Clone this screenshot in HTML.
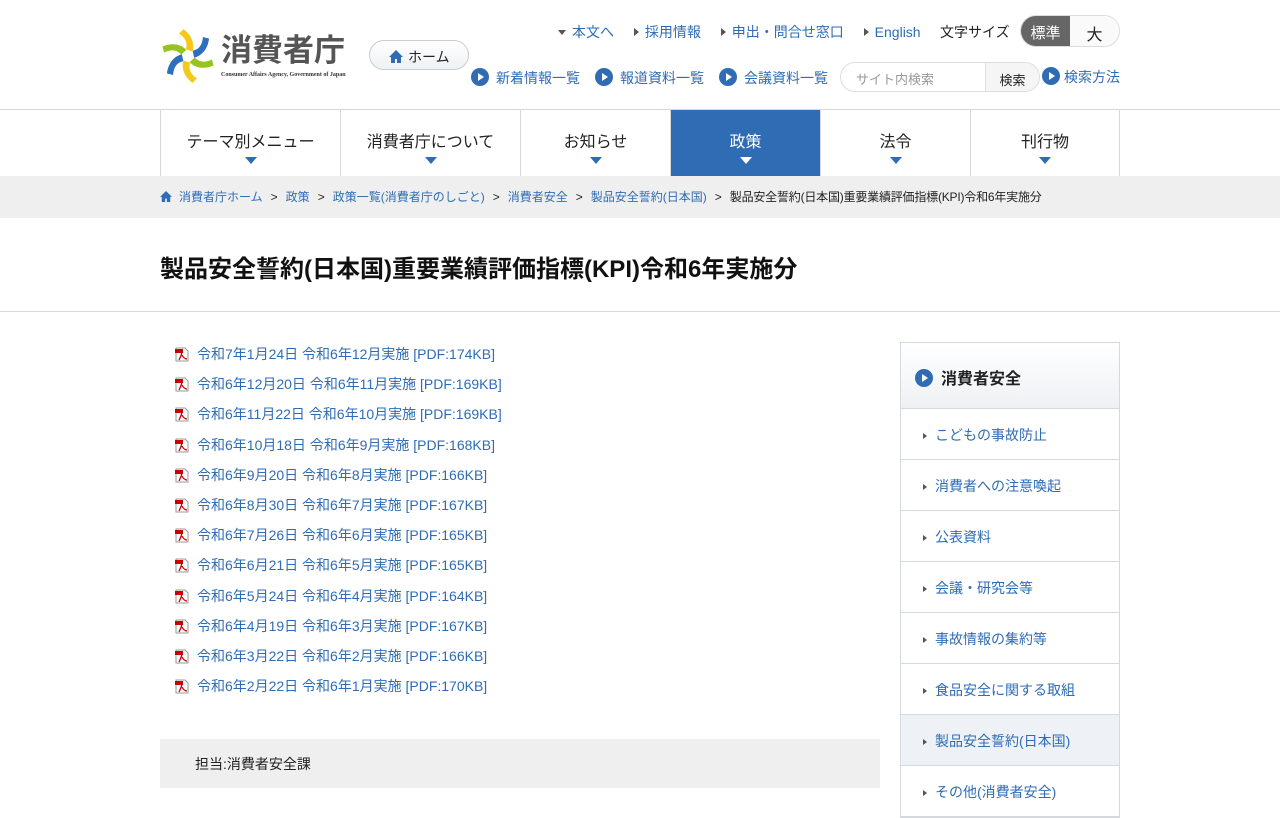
<!DOCTYPE html>
<html><head><meta charset="utf-8"><style>
*{box-sizing:border-box;margin:0;padding:0}
body{width:1280px;height:800px;overflow:hidden;background:#fff;font-family:"Liberation Sans","Noto Sans CJK JP",sans-serif;color:#222}
a{color:#2f6cb4;text-decoration:none}
.abs{position:absolute}
.hdr{position:relative;height:110px;border-bottom:1px solid #d5d8dc}
.circ{display:inline-block;width:18px;height:18px;border-radius:50%;background:#2f6cb4;position:relative;vertical-align:-3px;margin-right:7px}
.circ:after{content:"";position:absolute;left:7px;top:5px;border-left:6px solid #fff;border-top:4px solid transparent;border-bottom:4px solid transparent}
.tri{display:inline-block;border-left:5px solid #555;border-top:4px solid transparent;border-bottom:4px solid transparent;margin-right:6px;vertical-align:1px}
.nav{position:absolute;top:110px;left:160px;width:960px;height:66px;display:flex;border-left:1px solid #d5d8dc}
.nav div{border-right:1px solid #d5d8dc;text-align:center;font-size:16px;padding-top:18px;position:relative}
.nav div:after{content:"";position:absolute;left:50%;margin-left:-6px;top:47px;border-top:7px solid #2f6cb4;border-left:6px solid transparent;border-right:6px solid transparent}
.nav .act{background:#2f6cb4;color:#fff}
.nav .act:after{border-top-color:#fff}
.bc{position:absolute;top:176px;left:0;width:1280px;height:42px;background:#efefef;font-size:12px;padding:12px 0 0 160px;white-space:nowrap}
.bc span.s{margin:0 8px;color:#222}
.list{position:absolute;left:175px;top:344px;font-size:14px}
.list div{height:30.2px}
.pdf{display:inline-block;width:15px;height:15px;vertical-align:-3px;margin-right:7px}
.side{position:absolute;left:900px;top:342px;width:220px;border:1px solid #d5d8dc}
.side .h{height:66px;background:linear-gradient(#fff,#eef1f4);font-weight:bold;font-size:16px;padding:22px 0 0 14px;border-bottom:1px solid #d5d8dc}
.side .i{height:51px;border-bottom:1px solid #d5d8dc;font-size:14px;padding:16px 0 0 22px}
.side .i .tri{border-left-width:4px;border-top-width:3.5px;border-bottom-width:3.5px;margin-right:8px}
</style></head><body>
<div class="hdr">
 <svg class="abs" style="left:158px;top:28px" width="60" height="56" viewBox="-30 -28 60 56">
  <g transform="scale(1.12)">
  <path d="M-4,-24 C4,-18 6,-10 4,-4 L-2,-6 C0,-11 -2,-16 -8,-20 Z" fill="#f6c81a"/>
  <g transform="rotate(60)"><path d="M-4,-24 C4,-18 6,-10 4,-4 L-2,-6 C0,-11 -2,-16 -8,-20 Z" fill="#2e6fbd"/></g>
  <g transform="rotate(120)"><path d="M-4,-24 C4,-18 6,-10 4,-4 L-2,-6 C0,-11 -2,-16 -8,-20 Z" fill="#97c31e"/></g>
  <g transform="rotate(180)"><path d="M-4,-24 C4,-18 6,-10 4,-4 L-2,-6 C0,-11 -2,-16 -8,-20 Z" fill="#f6c81a"/></g>
  <g transform="rotate(240)"><path d="M-4,-24 C4,-18 6,-10 4,-4 L-2,-6 C0,-11 -2,-16 -8,-20 Z" fill="#2e6fbd"/></g>
  <g transform="rotate(300)"><path d="M-4,-24 C4,-18 6,-10 4,-4 L-2,-6 C0,-11 -2,-16 -8,-20 Z" fill="#97c31e"/></g>
  </g>
 </svg>
 <div class="abs" style="left:221px;top:33px;font-size:31px;color:#555;font-weight:bold;line-height:36px">消費者庁</div>
 <div class="abs" style="left:221px;top:72px;font-size:6px;font-family:'Liberation Serif',serif;font-weight:bold;color:#333">Consumer Affairs Agency, Government of Japan</div>
 <div class="abs" style="left:369px;top:40px;width:100px;height:30px;border:1px solid #ccc;border-radius:15px;background:linear-gradient(#fff,#eef1f4);font-size:14px;padding:6px 0 0 19px"><svg width="14" height="13" viewBox="0 0 14 13" style="vertical-align:-1px;margin-right:5px"><path d="M7 0L0 7h2v6h4V9h2v4h4V7h2z" fill="#2f6cb4"/></svg>ホーム</div>
 <div class="abs" style="left:558px;top:22px;font-size:14px;white-space:nowrap">
  <span style="display:inline-block;border-top:5px solid #555;border-left:4px solid transparent;border-right:4px solid transparent;margin-right:6px;vertical-align:2px"></span><a>本文へ</a>
  <span class="tri" style="margin-left:16px"></span><a>採用情報</a>
  <span class="tri" style="margin-left:16px"></span><a>申出・問合せ窓口</a>
  <span class="tri" style="margin-left:16px"></span><a>English</a>
 </div>
 <div class="abs" style="left:940px;top:22px;font-size:14px">文字サイズ</div>
 <div class="abs" style="left:1020px;top:15px;width:100px;height:32px;border:1px solid #ddd;border-radius:16px;overflow:hidden;display:flex;font-size:15px">
  <div style="width:50px;background:#666;color:#fff;text-align:center;padding-top:6px">標準</div><div style="width:50px;text-align:center;padding-top:5px;background:#fafafa;font-size:16px">大</div></div>
 <div class="abs" style="left:471px;top:68px;font-size:14px;white-space:nowrap"><span class="circ"></span><a>新着情報一覧</a><span class="circ" style="margin-left:15px"></span><a>報道資料一覧</a><span class="circ" style="margin-left:15px"></span><a>会議資料一覧</a></div>
 <div class="abs" style="left:840px;top:62px;width:200px;height:30px;border:1px solid #ddd;border-radius:15px;overflow:hidden;display:flex;font-size:13px">
  <div style="width:144px;color:#999;padding:6px 0 0 15px">サイト内検索</div><div style="flex:1;border-left:1px solid #ddd;background:#f5f5f5;padding-top:7px;text-align:center">検索</div></div>
 <div class="abs" style="left:1042px;top:67px;font-size:14px"><span class="circ" style="margin-right:4px"></span><a>検索方法</a></div>
</div>
<div class="nav"><div style="width:180px">テーマ別メニュー</div><div style="width:180px">消費者庁について</div><div style="width:150px">お知らせ</div><div class="act" style="width:150px">政策</div><div style="width:150px">法令</div><div style="width:149px">刊行物</div></div>
<div class="bc"><svg width="12" height="11" viewBox="0 0 14 13" style="vertical-align:-1px;margin-right:7px"><path d="M7 0L0 7h2v6h4V9h2v4h4V7h2z" fill="#2f6cb4"/></svg><a>消費者庁ホーム</a><span class="s">&gt;</span><a>政策</a><span class="s">&gt;</span><a>政策一覧(消費者庁のしごと)</a><span class="s">&gt;</span><a>消費者安全</a><span class="s">&gt;</span><a>製品安全誓約(日本国)</a><span class="s">&gt;</span><span style="letter-spacing:-0.2px">製品安全誓約(日本国)重要業績評価指標(KPI)令和6年実施分</span></div>
<div class="abs" style="left:160px;top:249px;font-size:24px;font-weight:bold;color:#111">製品安全誓約(日本国)重要業績評価指標(KPI)令和6年実施分</div>
<div class="abs" style="left:0;top:311px;width:1280px;border-top:1px solid #d5d8dc"></div>
<div class="list">
<div><svg class="pdf" viewBox="0 0 15 15"><path d="M1 1h9l3 3v10H1z" fill="#fff" stroke="#999"/><rect x="0" y="2" width="8" height="4" fill="#c00"/><path d="M4 13c2-4 3-7 3-9M7 8c1 2 3 4 5 4" stroke="#c00" fill="none" stroke-width="1.3"/></svg><a>令和7年1月24日 令和6年12月実施 [PDF:174KB]</a></div>
<div><svg class="pdf" viewBox="0 0 15 15"><path d="M1 1h9l3 3v10H1z" fill="#fff" stroke="#999"/><rect x="0" y="2" width="8" height="4" fill="#c00"/><path d="M4 13c2-4 3-7 3-9M7 8c1 2 3 4 5 4" stroke="#c00" fill="none" stroke-width="1.3"/></svg><a>令和6年12月20日 令和6年11月実施 [PDF:169KB]</a></div>
<div><svg class="pdf" viewBox="0 0 15 15"><path d="M1 1h9l3 3v10H1z" fill="#fff" stroke="#999"/><rect x="0" y="2" width="8" height="4" fill="#c00"/><path d="M4 13c2-4 3-7 3-9M7 8c1 2 3 4 5 4" stroke="#c00" fill="none" stroke-width="1.3"/></svg><a>令和6年11月22日 令和6年10月実施 [PDF:169KB]</a></div>
<div><svg class="pdf" viewBox="0 0 15 15"><path d="M1 1h9l3 3v10H1z" fill="#fff" stroke="#999"/><rect x="0" y="2" width="8" height="4" fill="#c00"/><path d="M4 13c2-4 3-7 3-9M7 8c1 2 3 4 5 4" stroke="#c00" fill="none" stroke-width="1.3"/></svg><a>令和6年10月18日 令和6年9月実施 [PDF:168KB]</a></div>
<div><svg class="pdf" viewBox="0 0 15 15"><path d="M1 1h9l3 3v10H1z" fill="#fff" stroke="#999"/><rect x="0" y="2" width="8" height="4" fill="#c00"/><path d="M4 13c2-4 3-7 3-9M7 8c1 2 3 4 5 4" stroke="#c00" fill="none" stroke-width="1.3"/></svg><a>令和6年9月20日 令和6年8月実施 [PDF:166KB]</a></div>
<div><svg class="pdf" viewBox="0 0 15 15"><path d="M1 1h9l3 3v10H1z" fill="#fff" stroke="#999"/><rect x="0" y="2" width="8" height="4" fill="#c00"/><path d="M4 13c2-4 3-7 3-9M7 8c1 2 3 4 5 4" stroke="#c00" fill="none" stroke-width="1.3"/></svg><a>令和6年8月30日 令和6年7月実施 [PDF:167KB]</a></div>
<div><svg class="pdf" viewBox="0 0 15 15"><path d="M1 1h9l3 3v10H1z" fill="#fff" stroke="#999"/><rect x="0" y="2" width="8" height="4" fill="#c00"/><path d="M4 13c2-4 3-7 3-9M7 8c1 2 3 4 5 4" stroke="#c00" fill="none" stroke-width="1.3"/></svg><a>令和6年7月26日 令和6年6月実施 [PDF:165KB]</a></div>
<div><svg class="pdf" viewBox="0 0 15 15"><path d="M1 1h9l3 3v10H1z" fill="#fff" stroke="#999"/><rect x="0" y="2" width="8" height="4" fill="#c00"/><path d="M4 13c2-4 3-7 3-9M7 8c1 2 3 4 5 4" stroke="#c00" fill="none" stroke-width="1.3"/></svg><a>令和6年6月21日 令和6年5月実施 [PDF:165KB]</a></div>
<div><svg class="pdf" viewBox="0 0 15 15"><path d="M1 1h9l3 3v10H1z" fill="#fff" stroke="#999"/><rect x="0" y="2" width="8" height="4" fill="#c00"/><path d="M4 13c2-4 3-7 3-9M7 8c1 2 3 4 5 4" stroke="#c00" fill="none" stroke-width="1.3"/></svg><a>令和6年5月24日 令和6年4月実施 [PDF:164KB]</a></div>
<div><svg class="pdf" viewBox="0 0 15 15"><path d="M1 1h9l3 3v10H1z" fill="#fff" stroke="#999"/><rect x="0" y="2" width="8" height="4" fill="#c00"/><path d="M4 13c2-4 3-7 3-9M7 8c1 2 3 4 5 4" stroke="#c00" fill="none" stroke-width="1.3"/></svg><a>令和6年4月19日 令和6年3月実施 [PDF:167KB]</a></div>
<div><svg class="pdf" viewBox="0 0 15 15"><path d="M1 1h9l3 3v10H1z" fill="#fff" stroke="#999"/><rect x="0" y="2" width="8" height="4" fill="#c00"/><path d="M4 13c2-4 3-7 3-9M7 8c1 2 3 4 5 4" stroke="#c00" fill="none" stroke-width="1.3"/></svg><a>令和6年3月22日 令和6年2月実施 [PDF:166KB]</a></div>
<div><svg class="pdf" viewBox="0 0 15 15"><path d="M1 1h9l3 3v10H1z" fill="#fff" stroke="#999"/><rect x="0" y="2" width="8" height="4" fill="#c00"/><path d="M4 13c2-4 3-7 3-9M7 8c1 2 3 4 5 4" stroke="#c00" fill="none" stroke-width="1.3"/></svg><a>令和6年2月22日 令和6年1月実施 [PDF:170KB]</a></div>
</div>
<div class="abs" style="left:160px;top:739px;width:720px;height:49px;background:#efefef;font-size:14px;padding:15px 0 0 35px">担当:消費者安全課</div>
<div class="side">
 <div class="h"><span class="circ" style="margin-right:8px"></span>消費者安全</div>
 <div class="i"><span class="tri"></span><a>こどもの事故防止</a></div>
 <div class="i"><span class="tri"></span><a>消費者への注意喚起</a></div>
 <div class="i"><span class="tri"></span><a>公表資料</a></div>
 <div class="i"><span class="tri"></span><a>会議・研究会等</a></div>
 <div class="i"><span class="tri"></span><a>事故情報の集約等</a></div>
 <div class="i"><span class="tri"></span><a>食品安全に関する取組</a></div>
 <div class="i" style="background:#eef2f6"><span class="tri"></span><a>製品安全誓約(日本国)</a></div>
 <div class="i"><span class="tri"></span><a>その他(消費者安全)</a></div>
</div>
</body></html>
